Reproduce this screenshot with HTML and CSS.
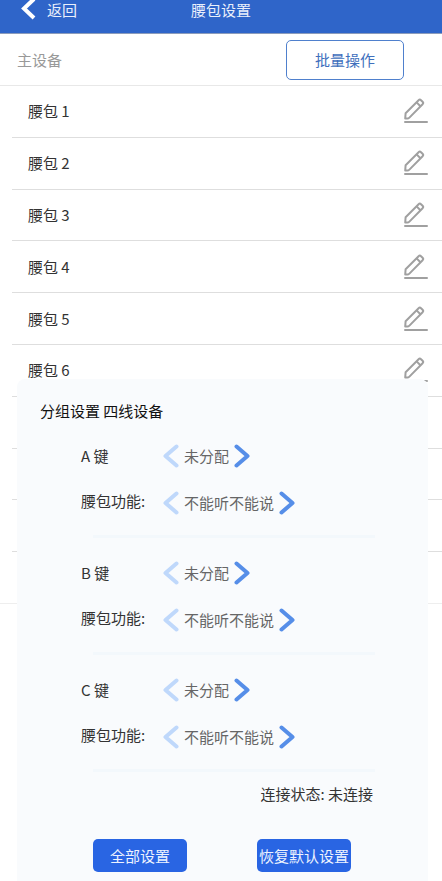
FILE: index.html
```html
<!DOCTYPE html>
<html lang="zh-CN">
<head>
<meta charset="utf-8">
<meta name="viewport" content="width=device-width, initial-scale=1">
<title>腰包设置</title>
<link rel="stylesheet" href="styles.css">
</head>
<body>
<svg class="defs" aria-hidden="true">
  <symbol id="pen" viewBox="0 0 24 26">
    <path d="M1.2 20.6L1.6 15.2L14.6 2.2Q15.8 1 17 2.2L18.6 3.8Q19.8 5 18.6 6.2L5.4 19.6Q4.4 20.6 3.4 20.6ZM12.6 4.4L16.4 8.2"/>
    <path d="M1 24H23"/>
  </symbol>
  <symbol id="prev" viewBox="0 0 16 24"><path d="M13.5 2.5L2.5 12L13.5 21.5"/></symbol>
  <symbol id="next" viewBox="0 0 16 24"><path d="M2.5 2.5L13.5 12L2.5 21.5"/></symbol>
</svg>

<header class="topbar">
  <a class="back" href="#"><svg viewBox="0 0 16 24"><path d="M14 1L4 10.5L14 20"/></svg>返回</a>
  <h1>腰包设置</h1>
</header>

<main>
  <div class="toolbar">
    <span>主设备</span>
    <button class="batch" type="button">批量操作</button>
  </div>
  <ul class="devices">
    <li>腰包 1<button type="button" aria-label="编辑"><svg><use href="#pen"/></svg></button></li>
    <li>腰包 2<button type="button" aria-label="编辑"><svg><use href="#pen"/></svg></button></li>
    <li>腰包 3<button type="button" aria-label="编辑"><svg><use href="#pen"/></svg></button></li>
    <li>腰包 4<button type="button" aria-label="编辑"><svg><use href="#pen"/></svg></button></li>
    <li>腰包 5<button type="button" aria-label="编辑"><svg><use href="#pen"/></svg></button></li>
    <li>腰包 6<button type="button" aria-label="编辑"><svg><use href="#pen"/></svg></button></li>
    <li></li>
    <li></li>
    <li></li>
    <li></li>
  </ul>
</main>

<section class="sheet">
  <h2>分组设置 四线设备</h2>
  <div class="group">
    <div class="row"><span class="name">A 键</span><div class="stepper"><button class="prev" type="button" aria-label="上一项"><svg><use href="#prev"/></svg></button><span>未分配</span><button type="button" aria-label="下一项"><svg><use href="#next"/></svg></button></div></div>
    <div class="row func"><span class="name">腰包功能:</span><div class="stepper"><button class="prev" type="button" aria-label="上一项"><svg><use href="#prev"/></svg></button><span>不能听不能说</span><button type="button" aria-label="下一项"><svg><use href="#next"/></svg></button></div></div>
  </div>
  <hr>
  <div class="group">
    <div class="row"><span class="name">B 键</span><div class="stepper"><button class="prev" type="button" aria-label="上一项"><svg><use href="#prev"/></svg></button><span>未分配</span><button type="button" aria-label="下一项"><svg><use href="#next"/></svg></button></div></div>
    <div class="row func"><span class="name">腰包功能:</span><div class="stepper"><button class="prev" type="button" aria-label="上一项"><svg><use href="#prev"/></svg></button><span>不能听不能说</span><button type="button" aria-label="下一项"><svg><use href="#next"/></svg></button></div></div>
  </div>
  <hr>
  <div class="group">
    <div class="row"><span class="name">C 键</span><div class="stepper"><button class="prev" type="button" aria-label="上一项"><svg><use href="#prev"/></svg></button><span>未分配</span><button type="button" aria-label="下一项"><svg><use href="#next"/></svg></button></div></div>
    <div class="row func"><span class="name">腰包功能:</span><div class="stepper"><button class="prev" type="button" aria-label="上一项"><svg><use href="#prev"/></svg></button><span>不能听不能说</span><button type="button" aria-label="下一项"><svg><use href="#next"/></svg></button></div></div>
  </div>
  <hr>
  <p class="status">连接状态: 未连接</p>
  <div class="actions">
    <button type="button">全部设置</button>
    <button type="button">恢复默认设置</button>
  </div>
</section>
</body>
</html>
```
FILE: styles.css
```css
* { box-sizing: border-box; }

body {
  margin: 0;
  min-height: 100vh;
  position: relative;
  background: #fff;
  color: #333;
  font: 15px/24px "Noto Sans CJK SC", sans-serif;
}

h1, h2, p, ul { margin: 0; padding: 0; font-size: inherit; font-weight: 400; }
button { padding: 0; border: 0; background: none; color: inherit; font: inherit; cursor: pointer; }
svg { display: block; fill: none; stroke: currentColor; stroke-linecap: round; stroke-linejoin: round; }
.defs { position: absolute; width: 0; height: 0; }

.topbar {
  display: grid;
  grid-template-columns: 1fr auto 1fr;
  padding: 0 20px;
  height: 34px;
  background: #2f65c9;
  border-bottom: 1px solid #8c9cbb;
  color: #e9effb;
  line-height: 20px;
}
.back { display: flex; gap: 11px; color: inherit; text-decoration: none; }
.back svg { width: 16px; height: 24px; margin-top: -2px; stroke: #fff; stroke-width: 4; stroke-linecap: butt; stroke-linejoin: miter; }

.toolbar {
  display: flex;
  align-items: center;
  justify-content: space-between;
  height: 52px;
  padding: 0 38px 0 17px;
  border-bottom: 1px solid #e8e8e8;
  color: #999;
}
.batch {
  width: 118px;
  height: 40px;
  border: 1px solid #4f80cd;
  border-radius: 5px;
  color: #3f70bd;
}

.devices {
  display: grid;
  grid-auto-rows: 1fr;
  min-height: 518px;
  padding-left: 12px;
  list-style: none;
}
.devices li {
  display: flex;
  align-items: center;
  justify-content: space-between;
  padding: 0 14px 0 16px;
  border-bottom: 1px solid #dedede;
}
.devices li:last-child { margin-left: -12px; border-color: #eee; }
.devices svg { width: 24px; height: 26px; stroke: #a0a0a0; stroke-width: 2; }

.sheet {
  position: absolute;
  top: 379px;
  right: 14px;
  bottom: 0;
  left: 17px;
  padding: 20px 0 9px;
  border-radius: 8px 8px 0 0;
  background: #f9fbfd;
}
.sheet h2 { margin: 0 23px 21px; color: #111; }
.row { display: flex; padding-left: 64px; }
.func { margin-top: 23px; }
.name { width: 82px; }
.func .name { line-height: 20px; }
.stepper { display: flex; gap: 5px; color: #666; }
.stepper svg { width: 16px; height: 24px; stroke: #568ee8; stroke-width: 4; }
.stepper .prev svg { stroke: #bfd8fb; }
.sheet hr { height: 3px; margin: 20px 53px 23px 76px; border: 0; background: #f3f8fc; }
.status { margin: -13px 55px 33px; text-align: right; }
.actions { display: flex; justify-content: space-between; padding: 0 77px 0 76px; }
.actions button {
  width: 94px;
  height: 33px;
  border-radius: 5px;
  background: #2965e3;
  color: #edf3ff;
  white-space: nowrap;
}
```
